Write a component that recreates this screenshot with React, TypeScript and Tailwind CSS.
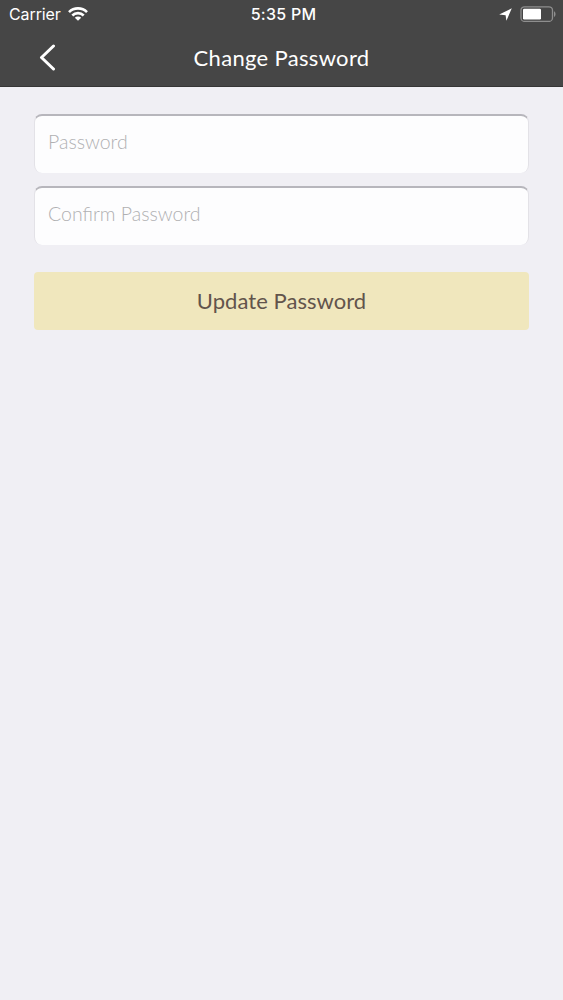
import { useState } from "react";

function StatusBar() {
  return (
    <div className="grid h-7 grid-cols-3 items-center pl-[9px] pr-[7px] font-['Inter',sans-serif] text-[16px] leading-none">
      <div className="flex items-center gap-[7px]">
        <span className="tracking-[-0.1px]">Carrier</span>
        <svg width="20" height="14" viewBox="0 0 20 14" fill="none" stroke="currentColor" strokeWidth="2.6">
          <path d="M1 5.1a12.8 12.8 0 0 1 18 0" />
          <path d="M4.3 8.5a8.1 8.1 0 0 1 11.4 0" />
          <path d="M10 13.8 6.8 10.8a4.6 4.6 0 0 1 6.4 0Z" fill="currentColor" stroke="none" />
        </svg>
      </div>
      <span className="pl-0.5 text-center text-[16px] font-medium tracking-[0.25px]">5:35 PM</span>
      <div className="flex items-center justify-end gap-2">
        <svg width="13" height="13" viewBox="0 0 13 13" fill="currentColor">
          <path d="M12.8.3 7.4 12.8 6.6 7.2 .2 6.6Z" />
        </svg>
        <svg width="36" height="16" viewBox="0 0 36 16" fill="none">
          <rect x="1" y="0.8" width="31.5" height="14.6" rx="3.5" stroke="#8e8e8e" strokeWidth="1.3" />
          <rect x="3" y="2.8" width="18" height="10.6" rx="1.2" fill="white" />
          <path d="M34 5.2c2 .7 2 5 0 5.7Z" fill="#8e8e8e" />
        </svg>
      </div>
    </div>
  );
}

function Header() {
  return (
    <header className="h-[87px] border-b border-[#363636] bg-[#464646] text-white">
      <StatusBar />
      <div className="grid h-[58px] grid-cols-[64px_1fr_64px] items-center">
        <button type="button" aria-label="Back" className="flex justify-end pr-2">
          <svg width="17" height="27" viewBox="0 0 17 27" fill="none" stroke="currentColor" strokeWidth="3" strokeLinecap="round" strokeLinejoin="round">
            <path d="M14.5 2 2.5 13.5l12 11.5" />
          </svg>
        </button>
        <h1 className="pt-0.5 text-center text-[22px] leading-none tracking-[0.33px]">Change Password</h1>
      </div>
    </header>
  );
}

type FieldProps = {
  placeholder: string;
  value: string;
  onChange: (value: string) => void;
};

function PasswordField({ placeholder, value, onChange }: FieldProps) {
  return (
    <input
      type="password"
      placeholder={placeholder}
      value={value}
      onChange={(e) => onChange(e.target.value)}
      className="h-[58.5px] w-full rounded-lg border-x border-t-[2.5px] border-x-[#e3e2e7] border-t-[#b7b6bc] bg-[#fdfdfe] px-[13px] pb-1.5 text-[19.5px] font-light text-[#464646] outline-none placeholder:text-[#b0b0b2]"
    />
  );
}

export default function App() {
  const [password, setPassword] = useState("");
  const [confirm, setConfirm] = useState("");

  return (
    <div className="min-h-screen bg-[#f0eff4] font-['Lato',sans-serif]">
      <Header />
      <form className="flex flex-col px-[34px] pt-[27px]">
        <div className="flex flex-col gap-[13.5px]">
          <PasswordField placeholder="Password" value={password} onChange={setPassword} />
          <PasswordField placeholder="Confirm Password" value={confirm} onChange={setConfirm} />
        </div>
        <button
          type="button"
          className="mt-[27.5px] h-[58px] rounded bg-[#f0e7bd] pb-0.5 text-[22px] tracking-[0.05px] text-[#62544c]"
        >
          Update Password
        </button>
      </form>
    </div>
  );
}
